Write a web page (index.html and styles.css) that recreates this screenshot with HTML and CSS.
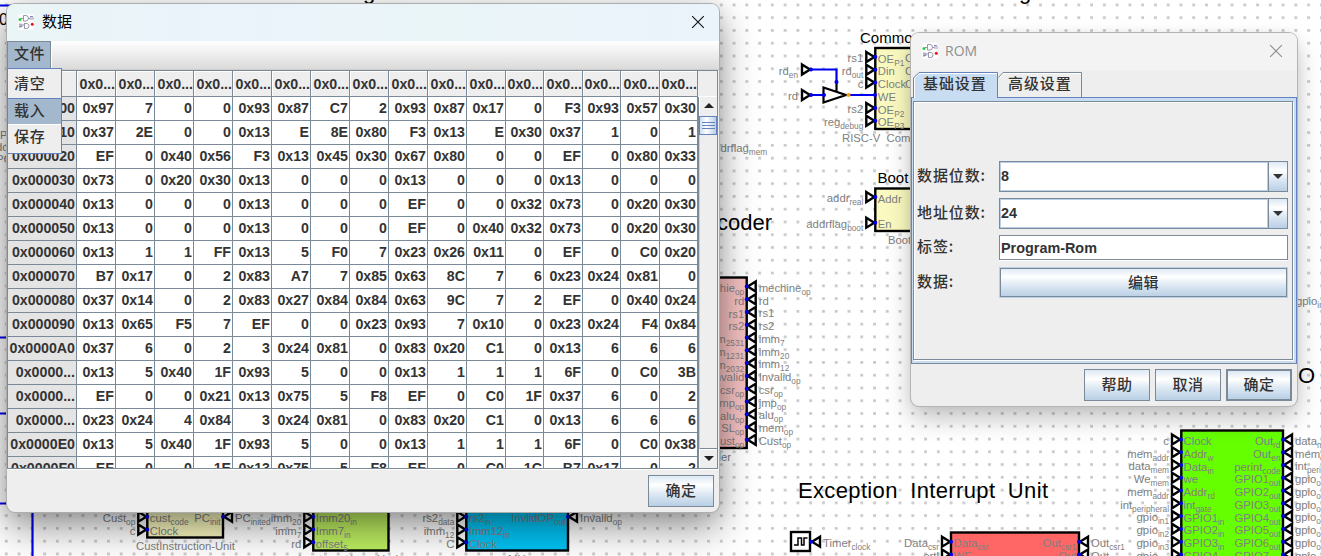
FILE: index.html
```html
<!DOCTYPE html>
<html lang="zh-CN">
<head>
<meta charset="utf-8">
<title>数据</title>
<link rel="stylesheet" href="styles.css">
</head>
<body>
<main class="desktop">
  <svg class="circuit" id="circuit" width="1321" height="556" viewBox="0 0 1321 556">
    <defs>
      <pattern id="grid" x="-0.1" y="-1.4" width="12.768" height="12.768" patternUnits="userSpaceOnUse">
        <rect x="5" y="5" width="2.8" height="2.6" fill="#c6c6c6"/>
      </pattern>
    </defs>
    <rect width="1321" height="556" fill="#fff"/>
    <rect width="1321" height="556" fill="url(#grid)"/>
  </svg>

  <section class="window rom">
    <header class="titlebar">
      <svg class="app-icon" viewBox="0 0 16 16"><use href="#logo"/></svg>
      <h1 class="title">ROM</h1>
      <svg class="close" viewBox="0 0 14 14"><path d="M1.2 1.2 12.8 12.8M12.8 1.2 1.2 12.8"/></svg>
    </header>
    <nav class="tabs">
      <svg class="tab-shape" width="171" height="28" viewBox="0 0 171 28">
        <path d="M1 28V6.500L6.500 1H84.500V28Z" fill="#c8ddf2"/>
        <path d="M.5 26V6L6 .5H84.500V26" fill="none" stroke="#6382bf"/>
        <path d="M1.500 26V6.500L6.500 1.500H84" fill="none" stroke="#fff"/>
        <path d="M85.500 5.500 90 .5H168.500V25" fill="none" stroke="#7a8a99"/>
        <path d="M86.500 6 90.500 1.500H168" fill="none" stroke="#fff"/>
      </svg>
      <span class="tab">基础设置</span>
      <span class="tab">高级设置</span>
    </nav>
    <div class="pane">
      <div class="form">
        <label class="name">数据位数:</label>
        <div class="combo"><span class="value">8</span><span class="arrow"></span></div>
        <label class="name">地址位数:</label>
        <div class="combo"><span class="value">24</span><span class="arrow"></span></div>
        <label class="name">标签:</label>
        <div class="field">Program-Rom</div>
        <label class="name">数据:</label>
        <button class="edit">编辑</button>
      </div>
    </div>
    <footer class="actions">
      <button class="btn">帮助</button>
      <button class="btn">取消</button>
      <button class="btn default">确定</button>
    </footer>
  </section>

  <section class="window data">
    <header class="titlebar">
      <svg class="app-icon" viewBox="0 0 16 16"><g id="logo">
        <rect width="16" height="16" rx="2.500" fill="#fdfdfd"/>
        <g fill="none" stroke="#8c8ca0" stroke-width=".9">
          <path d="M3 4.500H5.500M5.500 1.500H8Q10.500 1.800 10.500 4.200 10.500 6.600 8 7H5.500ZM10.500 4.500H12M12 2.500H15M13 2V6M15 3V6M3 9.500V13M1 12.500H4.500M6 9.500H9Q11 10 11 12 11 14.500 8.500 14.500H6.500V10M1 10H2V14"/>
        </g>
        <path d="M10.500 4.500H12M12 2.500H14M3 11H6" stroke="#8686d8" fill="none"/>
        <circle cx="2" cy="5.500" r="1.500" fill="#21d33c"/>
        <circle cx="14.300" cy="10.300" r="1.500" fill="#e8141c"/>
      </g></svg>
      <h1 class="title">数据</h1>
      <svg class="close" viewBox="0 0 14 14"><path d="M1.200 1.200 12.800 12.800M12.800 1.200 1.200 12.800"/></svg>
    </header>
    <nav class="menubar"><span class="menu">文件</span></nav>
    <div class="scrollpane">
      <div class="viewport"><table class="hex" id="hex">
        <thead></thead><tbody></tbody>
      </table></div>
      <div class="side">
        <div class="corner"></div>
        <div class="scrollbar">
          <div class="step"><i class="up"></i></div>
          <div class="thumb"><i></i><i></i><i></i></div>
          <div class="track"></div>
          <div class="step last"><i class="down"></i></div>
        </div>
      </div>
    </div>
    <footer class="actions"><button class="btn">确定</button></footer>
    <ul class="popup">
      <li>清空</li>
      <li class="active">载入</li>
      <li>保存</li>
    </ul>
  </section>
</main>
<script src="script.js"></script>
</body>
</html>
```
FILE: styles.css
```css
* { box-sizing: border-box; }
body { margin: 0; }
.desktop {
  position: relative;
  width: 1321px;
  height: 556px;
  overflow: hidden;
  font-family: "Liberation Sans", "Noto Sans CJK SC", sans-serif;
  color: #333;
}
.circuit { display: block; }
.circuit text { font-family: "Liberation Sans", Arial, sans-serif; }

.window {
  position: absolute;
  display: flex;
  flex-direction: column;
  background: #eee;
  border-radius: 8px;
  overflow: visible;
}
.window.data {
  left: 7px; top: 4px; width: 712px; height: 508px;
  box-shadow: 0 0 0 1px #adadad, 0 16px 38px rgba(0,0,0,.42), 0 1px 20px rgba(0,0,0,.12);
}
.window.rom {
  left: 911px; top: 33px; width: 386px; height: 373px;
  box-shadow: 0 0 0 1px #b4b4b4, 0 12px 24px rgba(0,0,0,.25), 0 0 10px rgba(0,0,0,.06);
}

.titlebar {
  flex: none;
  display: flex;
  align-items: center;
  height: 37px;
  padding: 0 14px 2px 11px;
  border-radius: 8px 8px 0 0;
  background: linear-gradient(90deg, #eaf5f6, #ebf3fb 30%, #eaf5f8 60%, #ebf3fb);
}
.rom .titlebar { background: #f3f3f3; padding-bottom: 1px; }
.app-icon { width: 16px; height: 16px; }
.title {
  flex: 1;
  margin: 0 0 0 8px;
  font: 400 15px/20px "Open Sans", "Noto Sans CJK SC", sans-serif;
  color: #000;
}
.data .title { position: relative; top: -1px; }
.rom .title { font-size: 14px; color: #8f8f8f; margin-left: 7px; }
.close { width: 14px; height: 14px; fill: none; stroke: #111; stroke-width: 1.1; }
.rom .close { stroke: #8b8b8b; }

.menubar {
  flex: none;
  display: flex;
  height: 29px;
  padding-bottom: 1px;
  background: linear-gradient(#fff, #dadada);
  border-bottom: 1px solid #ccc;
}
.menu {
  width: 44px;
  height: 27px;
  padding-left: 6px;
  background: #a3b8cc;
  border: 1px solid #7a8a99;
  border-bottom: 0;
  box-shadow: 1px 0 #fff;
  font: 500 15px/21px "Noto Sans CJK SC", sans-serif;
  letter-spacing: .4px;
}
.popup {
  position: absolute;
  left: 0; top: 64px;
  width: 55px;
  margin: 0;
  padding: 1px 0 0;
  list-style: none;
  background: #eee;
  border: 1px solid #6382bf;
  font: 500 15px/26px "Noto Sans CJK SC", sans-serif;
  letter-spacing: .8px;
}
.popup li { height: 28px; padding-left: 6px; }
.popup .active {
  height: 27px;
  line-height: 22px;
  background: #a3b8cc;
  border-top: 1px solid #6382bf;
  border-bottom: 1px solid #fff;
}
.popup li:last-child { line-height: 22px; }

.scrollpane {
  flex: none;
  display: flex;
  height: 399px;
  width: 711px;
  border: 1px solid #7a8a99;
  box-shadow: 0 1px #fff;
}
.viewport { flex: none; width: 690px; overflow: hidden; background: #fff; }
.hex {
  table-layout: fixed;
  width: 690px;
  border-collapse: separate;
  border-spacing: 0;
  font-weight: 700;
  font-size: 14.2px;
  line-height: 23px;
}
.hex td, .hex th {
  height: 24px;
  padding: 0 1px 0 0;
  text-align: right;
  white-space: nowrap;
  overflow: hidden;
  border-right: 1px solid #7a8a99;
  border-bottom: 1px solid #7a8a99;
}
.hex thead th {
  height: 26px;
  padding: 1px 0 0;
  background: #eee;
  border-bottom-color: #7a8a99;
  box-shadow: inset 1px 1px #fff;
}
.hex tbody th { background: #e4e4e4; }
.side { flex: 1; display: flex; flex-direction: column; }
.corner { height: 26px; border-bottom: 1px solid #fff; }
.scrollbar {
  flex: 1;
  display: flex;
  flex-direction: column;
  border-left: 1px solid #7a8a99;
  background: #eee;
}
.step { height: 19px; padding-bottom: 2px; display: grid; place-items: center; border-left: 1px solid #fff; }
.step.last { height: 20px; padding: 0; border-top: 1px solid #7a8a99; box-shadow: inset 0 1px #fff; }
.step .up { border: 5px solid transparent; border-top: 0; border-bottom-color: #222; }
.step .down { border: 5px solid transparent; border-bottom: 0; border-top-color: #222; }
.thumb {
  height: 19px;
  display: flex;
  flex-direction: column;
  justify-content: center;
  align-items: center;
  gap: 2px;
  border: 1px solid #6382bf;
  background: linear-gradient(90deg, #c8ddf2, #fff 40%, #b8cfe5);
}
.thumb i { width: 13px; height: 1px; background: #6382bf; }
.track { flex: 1; border-left: 1px solid #c9d0d8; }

.actions { display: flex; justify-content: flex-end; gap: 5px; }
.data .actions { padding: 6px 5px 0 0; }
.rom .actions { padding: 5px 5px 0 0; }
.btn, .edit {
  margin: 0;
  padding: 0 0 2px;
  border: 1px solid #7a8a99;
  border-radius: 0;
  color: #333;
  background: linear-gradient(#dde8f3, #fff 30%, #dde8f3 60%, #b8cfe5);
  font: 500 15px/20px "Noto Sans CJK SC", sans-serif;
  letter-spacing: .6px;
}
.btn { width: 66px; height: 32px; }
.btn.default { border-width: 2px; }

.tabs {
  flex: none;
  position: relative;
  display: flex;
  height: 27px;
  padding: 2px 0 0 2px;
}
.tab-shape { position: absolute; left: 2px; top: 2px; z-index: 1; }
.tab {
  position: relative;
  z-index: 2;
  width: 85px;
  padding-left: 10px;
  font: 500 15px/22px "Noto Sans CJK SC", sans-serif;
  letter-spacing: .9px;
}
.pane {
  flex: none;
  height: 267px;
  padding: 3px 2px 2px 1px;
  border: 1px solid #6382bf;
  border-bottom-color: #7a8a99;
  background: #c8ddf2;
}
.form {
  height: 259px;
  margin: 0 1px 1px 0;
  display: grid;
  grid-template-columns: 82px 289px;
  grid-template-rows: 31px 31px 25px 32px;
  row-gap: 6px;
  padding: 59px 0 0 3px;
  border: 1px solid #7a8a99;
  background: #eee;
  box-shadow: 1px 1px #fff, inset 1px 1px #fff;
}
.name {
  align-self: center;
  padding-bottom: 3px;
  font: 500 15px/22px "Noto Sans CJK SC", sans-serif;
  letter-spacing: .9px;
}
.combo {
  display: flex;
  height: 31px;
  border: 1px solid #7a8a99;
  font-weight: 700;
  font-size: 14.4px;
}
.value { flex: 1; border: 1px solid #b8cfe5; background: #fff; line-height: 27px; }
.arrow {
  width: 19px;
  display: grid;
  place-items: center;
  border-left: 1px solid #7a8a99;
  background: linear-gradient(#dde8f3, #fff 30%, #dde8f3 60%, #b8cfe5);
}
.arrow::after { content: ""; border: 5px solid transparent; border-bottom: 0; border-top-color: #333; }
.field {
  border: 1px solid #7a8a99;
  background: #fff;
  box-shadow: 0 1px #fff;
  font-weight: 700;
  font-size: 14.4px;
  line-height: 24px;
  padding-left: 1px;
}
.edit { height: 31px; margin-top: 1px; border-color: #7a8a99; outline: 1px solid #b8cfe5; outline-offset: -1px; box-shadow: inset 0 0 0 1px #7a8a99; }
```
FILE: script.js
```js
// Hex editor contents: row address followed by 16 cells.
const rows = `
0x000000|0x97 7 0 0 0x93 0x87 C7 2 0x93 0x87 0x17 0 F3 0x93 0x57 0x30
0x000010|0x37 2E 0 0 0x13 E 8E 0x80 F3 0x13 E 0x30 0x37 1 0 1
0x000020|EF 0 0x40 0x56 F3 0x13 0x45 0x30 0x67 0x80 0 0 EF 0 0x80 0x33
0x000030|0x73 0 0x20 0x30 0x13 0 0 0 0x13 0 0 0 0x13 0 0 0
0x000040|0x13 0 0 0 0x13 0 0 0 EF 0 0 0x32 0x73 0 0x20 0x30
0x000050|0x13 0 0 0 0x13 0 0 0 EF 0 0x40 0x32 0x73 0 0x20 0x30
0x000060|0x13 1 1 FF 0x13 5 F0 7 0x23 0x26 0x11 0 EF 0 C0 0x20
0x000070|B7 0x17 0 2 0x83 A7 7 0x85 0x63 8C 7 6 0x23 0x24 0x81 0
0x000080|0x37 0x14 0 2 0x83 0x27 0x84 0x84 0x63 9C 7 2 EF 0 0x40 0x24
0x000090|0x13 0x65 F5 7 EF 0 0 0x23 0x93 7 0x10 0 0x23 0x24 F4 0x84
0x0000A0|0x37 6 0 2 3 0x24 0x81 0 0x83 0x20 C1 0 0x13 6 6 6
0x0000...|0x13 5 0x40 1F 0x93 5 0 0 0x13 1 1 1 6F 0 C0 3B
0x0000...|EF 0 0 0x21 0x13 0x75 5 F8 EF 0 C0 1F 0x37 6 0 2
0x0000...|0x23 0x24 4 0x84 3 0x24 0x81 0 0x83 0x20 C1 0 0x13 6 6 6
0x0000E0|0x13 5 0x40 1F 0x93 5 0 0 0x13 1 1 1 6F 0 C0 0x38
0x0000F0|EF 0 0 1E 0x13 0x75 5 F8 EF 0 C0 1C B7 0x17 0 2`.trim().split('\n');

const edges = [76, 115, 154, 193, 232, 271, 310, 349, 388, 427, 466, 505, 543, 582, 620, 659, 697];
const table = document.getElementById('hex');
let cols = '<col style="width:69px">';
for (let i = 1; i < edges.length; i++) cols += `<col style="width:${edges[i] - edges[i - 1]}px">`;
table.insertAdjacentHTML('afterbegin', `<colgroup>${cols}</colgroup>`);
table.tHead.innerHTML = '<tr><th></th>' + '<th>0x0...</th>'.repeat(16) + '</tr>';
table.tBodies[0].innerHTML = rows.map(r => {
  const [addr, cells] = r.split('|');
  return `<tr><th>${addr}</th>${cells.split(' ').map(c => `<td>${c}</td>`).join('')}</tr>`;
}).join('');

// Circuit drawing helpers.
let out = '';
const GRAY = '#808080';
const STEP = 12.768;
const text = (x, y, s, size = 22, fill = '#000', anchor = 'start', extra = '') => {
  out += `<text x="${x}" y="${y}" font-size="${size}" fill="${fill}" text-anchor="${anchor}" ${extra}>${s}</text>`;
};
const label = (x, y, s, anchor = 'start') => {
  const [main, sub] = s.split('_');
  text(x, y, main + (sub ? `<tspan font-size="8.300" dy="3">${sub}</tspan>` : ''), 11.3, GRAY, anchor);
};
const box = (x1, y1, x2, y2, fill) => {
  out += `<rect x="${x1}" y="${y1}" width="${x2 - x1}" height="${y2 - y1}" fill="${fill}" stroke="#000" stroke-width="2.400"/>`;
};
const dot = (x, y, c = '#0000f0') => { out += `<circle cx="${x}" cy="${y}" r="2" fill="${c}"/>`; };
const wire = (d, c = '#0000f0') => { out += `<path d="${d}" fill="none" stroke="${c}" stroke-width="2.200"/>`; };
const pin = (x, y, dir) => {
  const b = x - dir * 9;
  out += `<path d="M${b} ${y - 5}L${x - dir} ${y}L${b} ${y + 5}Z" fill="#fff" stroke="#000" stroke-width="2.400"/>`;
  dot(x, y);
};
// Pins on one side: outer label | inner label.
const pins = (x, y, dir, list) => list.forEach(([outer, inner], i) => {
  const py = y + i * STEP;
  if (outer !== null) {
    pin(x, py, dir);
    label(x - dir * 12, py + 5.3, outer, dir > 0 ? 'end' : 'start');
  }
  label(x + dir * 2.5, py + 5.5, inner, dir > 0 ? 'start' : 'end');
});

text(363, -1, 'g', 22);
text(1019, -1, 'g', 22);
text(-1, 24.500, '0', 16);
label(0, 138.500, 'P'); label(-4, 151, 'dc'); label(-4, 162.500, 'PC');
wire('M0 5.500H14M0 337.500H10M0 413.500H10M0 503.500H10M32.500 505V556');

text(772, 230, 'Decoder', 22, '#000', 'end');
text(798, 498, 'Exception Interrupt Unit', 22, '#000', 'start', 'word-spacing="6" textLength="250"');
text(1298, 383, 'O', 22);
text(860, 43, 'Common', 15);
text(877.500, 182.500, 'Boot', 15);
label(708, 152, 'addrflag_mem');
label(1296, 304.500, 'gpio_in3');

box(640, 277.500, 746.7, 448, '#f5c0c0');
pins(746.7, 286.5, -1, [['mechine_op', 'mechie_op'], ['rd', 'rd'], ['rs1', 'rs1'], ['rs2', 'rs2'],
  ['imm_7', 'imm_2531'], ['imm_20', 'imm_1231'], ['imm_12', 'imm_2032'], ['Invalid_op', 'Invalid'],
  ['csr_op', 'csr_op'], ['jmp_op', 'jmp_op'], ['alu_op', 'alu_op'], ['mem_op', 'SL_op'], ['Cust_op', 'Cust_op']]);
label(731, 461, 'Decoder', 'end');

box(875.3, 48, 980, 129, '#fafac0');
pins(875.3, 57, 1, [['rs1', 'OE_P1'], ['rd_out', 'Din'], ['c', 'Clock'], [null, 'WE'], ['rs2', 'OE_P2'], ['reg_debug', 'OE_P3']]);
label(905, 62, 'Out'); label(905, 75, 'Out'); label(905, 87.500, 'Out');
label(842, 142, 'RISC-V&#160; Common');
box(875.3, 188.500, 980, 231, '#fafac0');
pins(875.3, 197, 1, [['addr_real', 'Addr']]);
pins(875.3, 222.7, 1, [['addrflag_boot', 'En']]);
label(888, 244, 'Boot');
wire('M810 69.500H836.500V83'); wire('M836.500 82V91', '#000');
wire('M810 95H824M848 95H875');
out += '<path d="M823.500 87.500V102.500L846 95Z" fill="#fff" stroke="#000" stroke-width="2.200"/>';
pin(811, 69.5, 1); pin(811, 95, 1);
dot(836.5, 82); dot(824, 95); dot(848.5, 95, '#ff9a00'); dot(875, 95);
label(798, 74.5, 'rd_en', 'end'); label(798, 100, 'rd', 'end');

box(147.3, 480, 223, 537.5, '#fafac0');
pins(147.3, 516.7, 1, [['Cust_op', 'cust_code'], ['c', 'Clock']]);
pins(223, 516.7, -1, [['PC_inited', 'PC_init']]);
text(136, 549.5, 'CustInstruction-Unit', 11.3, GRAY, 'start', 'textLength="99"');
box(313.3, 480, 388.5, 550.5, '#bdf060');
pins(313.3, 516.7, 1, [['imm_20', 'Imm20_in'], ['imm_7', 'Imm7_in'], ['rd', 'offset_5']]);
text(298, 563, 'Instruction-Unit', 11.3, GRAY, 'start', 'textLength="105"');
box(466.3, 480, 568, 550.5, '#00c4f5');
pins(466.3, 516.7, 1, [['rs2_data', 'rs2_in'], ['imm_12', 'Imm12_in'], ['C', 'Clock']]);
pins(568, 516.7, -1, [['Invalid_op', 'InvlidOP_out']]);
label(508, 563, 'MU');

box(791, 532, 810, 551, '#fff');
out += '<path d="M794 545H798V538H801.500V545H804V538H807.500" fill="none" stroke="#000" stroke-width="1.500"/>';
pin(811, 541.7, -1); label(823, 546.5, 'Timer_clock');
box(951, 532.500, 1079, 600, '#ff6666');
pins(951, 541.7, 1, [['Data_csr', 'Data_csr'], ['ertl', 'WE']]);
pins(1079, 541.7, -1, [['Out_csr1', 'Out_csr1'], ['Out', 'Out']]);

box(1181.3, 430.500, 1283, 600, '#66ff00');
pins(1181, 439.5, 1, [['c', 'Clock'], ['mem_addr', 'Addr_w'], ['data_mem', 'Data_in'], ['We_mem', 'we'],
  ['mem_addr', 'Addr_rd'], ['int_peripheral', 'int_gate'], ['gpio_in1', 'GPIO1_in'], ['gpio_in2', 'GPIO2_in'],
  ['gpio_in3', 'GPIO3_in'], ['gpio_in4', 'GPIO4_in']]);
pins(1283, 439.5, -1, [['data_mem', 'Out_rd'], ['mem_en', 'Out_en'], ['int_peri', 'perint_code'], ['gpio_out1', 'GPIO1_out'],
  ['gpio_out2', 'GPIO2_out'], ['gpio_out3', 'GPIO3_out'], ['gpio_out4', 'GPIO4_out'], ['gpio_out5', 'GPIO5_out'],
  ['gpio_out6', 'GPIO6_out'], ['gpio_out7', 'GPIO7_out']]);

document.getElementById('circuit').insertAdjacentHTML('beforeend', out);
```
